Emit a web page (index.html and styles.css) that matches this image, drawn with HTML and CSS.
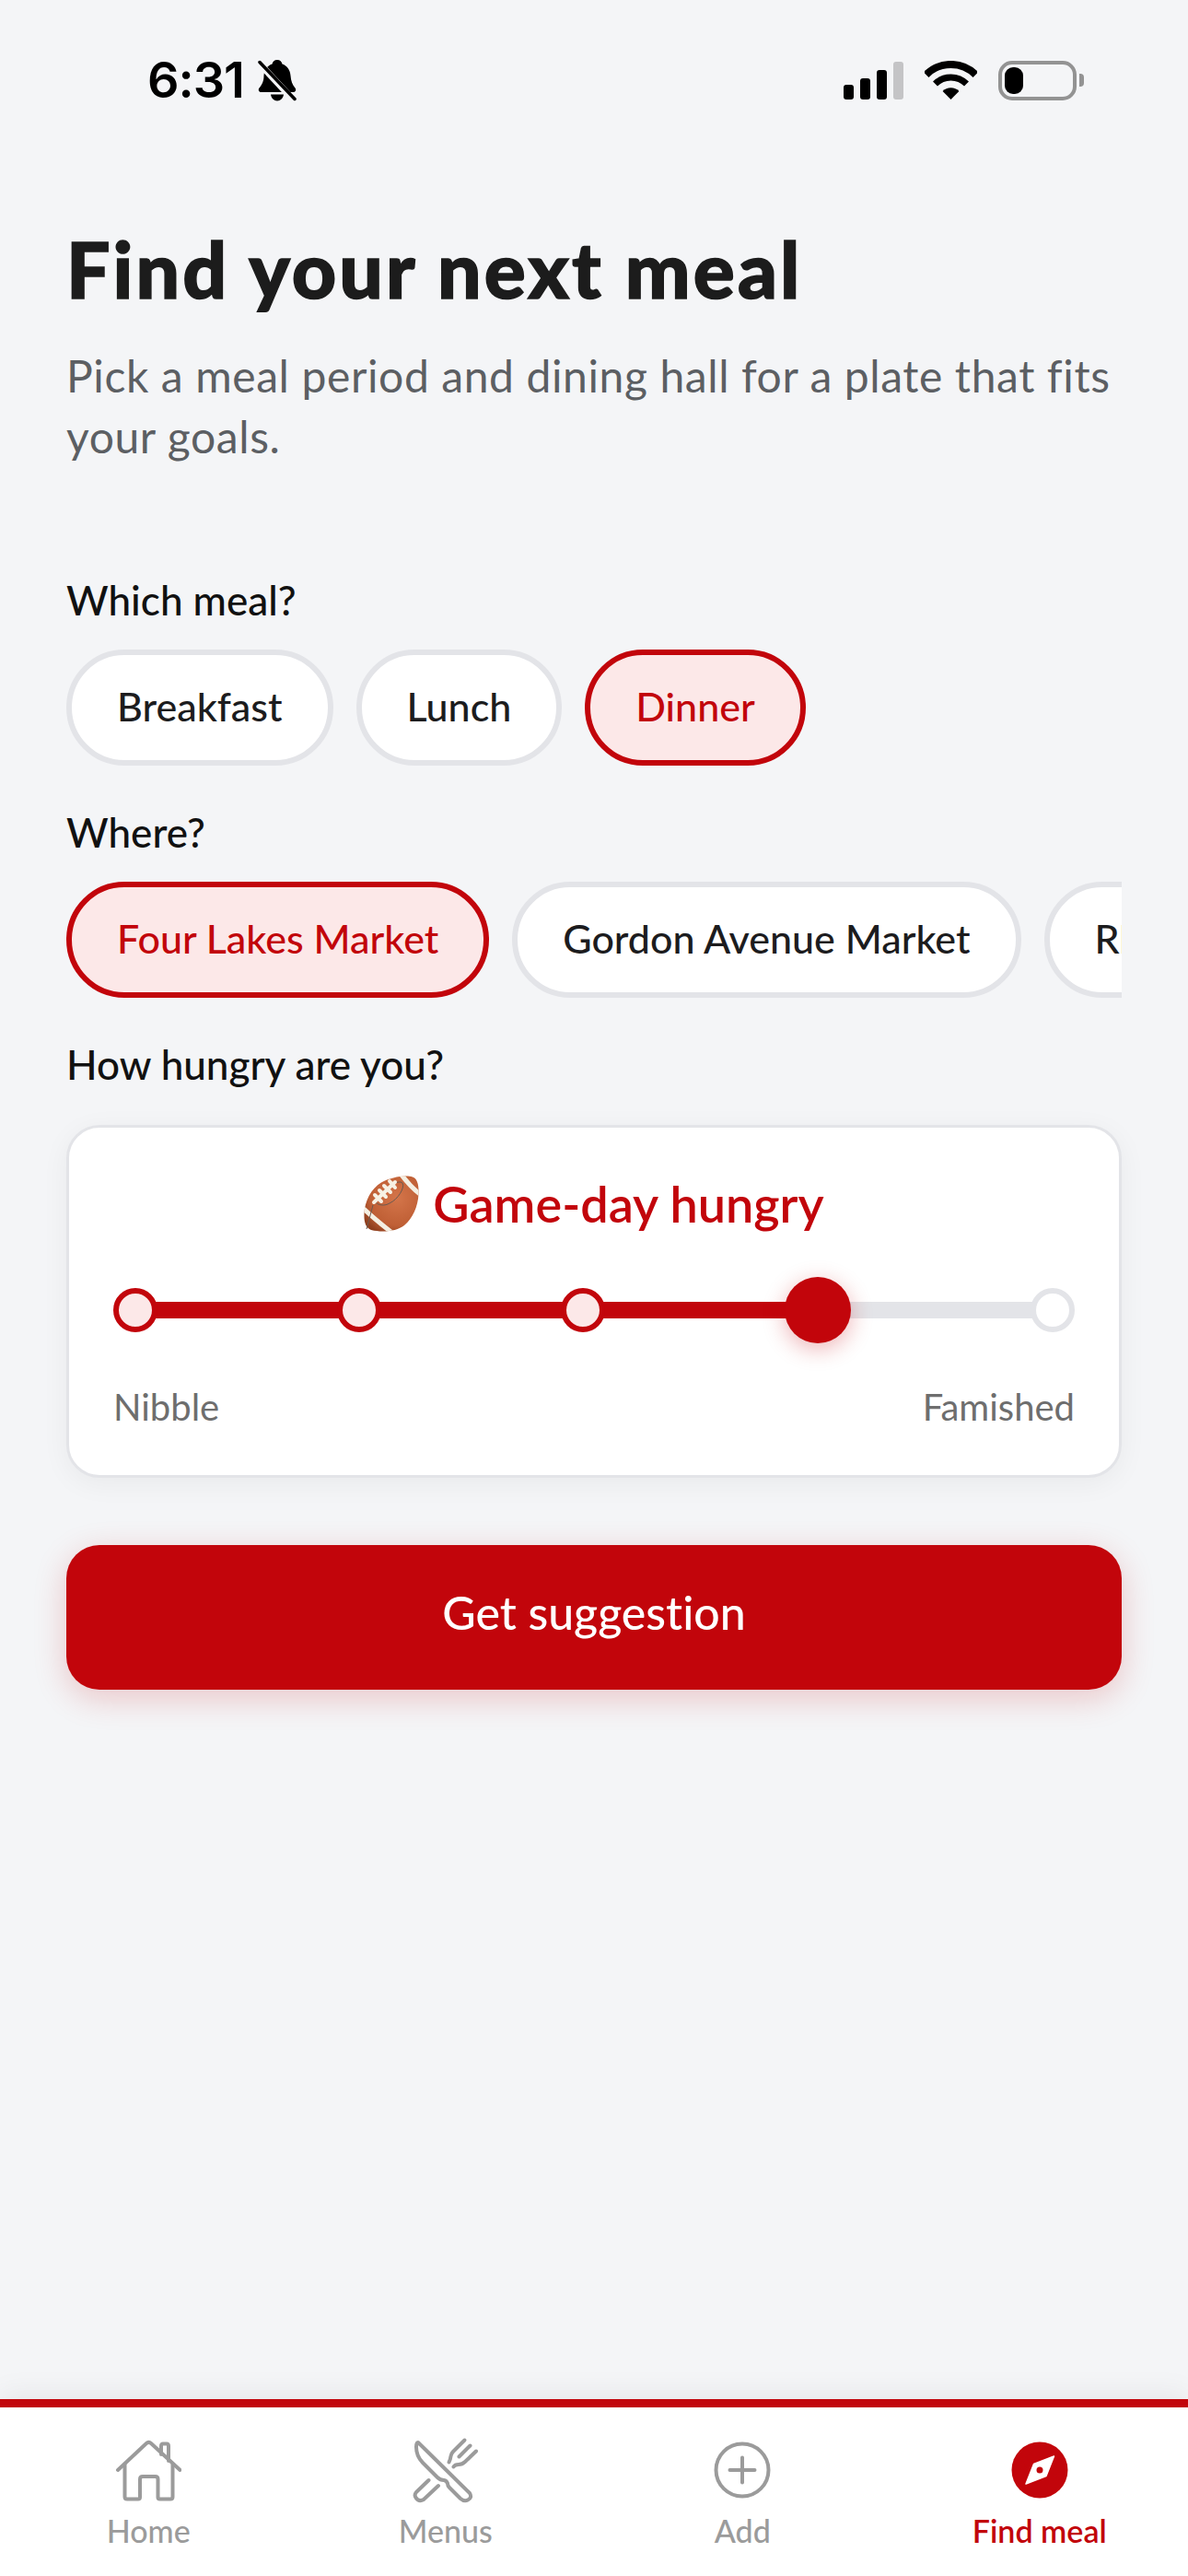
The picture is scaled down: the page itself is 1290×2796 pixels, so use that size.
FILE: index.html
```html
<!DOCTYPE html>
<html lang="en">
<head>
    <meta charset="UTF-8">
    <meta name="viewport" content="width=device-width, initial-scale=1.0">
    <title>Find meal</title>
    <link rel="stylesheet" href="styles.css">
</head>
<body>
    <!-- Status bar -->
    <header class="status-bar">
        <div class="status-left">
            <span class="clock">6:31</span>
            <svg class="bell" viewBox="0 0 42 45" width="42" height="45">
                <path fill="#000" d="M21 0c3 0 5 2 5.500 4.500C32 6.500 35 11 35.500 17c.5 6 2 10 5 13.500 1.500 2 .5 4.500-2 4.500H3.500c-2.500 0-3.500-2.500-2-4.500C4.500 27 6.500 23 6.500 17 7 11 10 6.500 15.500 4.500 16 2 18 0 21 0z"/>
                <path fill="#000" d="M14 37.500h14c-.5 4-3.500 7-7 7s-6.500-3-7-7z"/>
                <path stroke="#f4f5f7" stroke-width="7" d="M-2 0L40 45"/>
                <path stroke="#000" stroke-width="3.500" stroke-linecap="round" d="M2 2.500L40 42.500"/>
            </svg>
        </div>
        <div class="status-right">
            <div class="signal">
                <span class="bar bar-1"></span>
                <span class="bar bar-2"></span>
                <span class="bar bar-3"></span>
                <span class="bar bar-4"></span>
            </div>
            <svg class="wifi" viewBox="0 0 57 42" width="57" height="42">
                <path fill="none" stroke="#000" stroke-width="8" d="M1.600 15.100A38 38 0 0 1 55.400 15.100"/>
                <path fill="none" stroke="#000" stroke-width="7" d="M11.500 25A24 24 0 0 1 45.500 25"/>
                <path fill="#000" d="M28.500 42L19.600 33A12.500 12.500 0 0 1 37.400 33z"/>
            </svg>
            <div class="battery">
                <span class="battery-level"></span>
            </div>
            <span class="battery-nub"></span>
        </div>
    </header>

    <main class="content">
        <h1>Find your next meal</h1>
        <p class="subtitle">Pick a meal period and dining hall for a plate that fits your goals.</p>

        <h2 class="field-label">Which meal?</h2>
        <div class="chip-row">
            <button class="chip">Breakfast</button>
            <button class="chip">Lunch</button>
            <button class="chip chip-active">Dinner</button>
        </div>

        <h2 class="field-label">Where?</h2>
        <div class="chip-row">
            <button class="chip chip-active">Four Lakes Market</button>
            <button class="chip">Gordon Avenue Market</button>
            <button class="chip">Rheta's Market</button>
        </div>

        <h2 class="field-label field-label-card">How hungry are you?</h2>
        <section class="hunger-card">
            <div class="hunger-title">
                <svg class="football" viewBox="0 0 60 61" width="60" height="61">
                    <defs>
                        <radialGradient id="leather" cx="0.6" cy="0.4" r="0.7">
                            <stop offset="0" stop-color="#d4754a"/>
                            <stop offset="0.7" stop-color="#bf5f35"/>
                            <stop offset="1" stop-color="#8f3f1e"/>
                        </radialGradient>
                        <clipPath id="ball-clip">
                            <path d="M53 1.500C58 3 60 10 59.500 20 59 33 53 47 44 54 36 60.500 20 62 8 59 2 57 0 50 .5 41 1 28 8 14 19 7.500 29 2 45-1 53 1.500z"/>
                        </clipPath>
                    </defs>
                    <g clip-path="url(#ball-clip)">
                        <rect width="60" height="61" fill="url(#leather)"/>
                        <path fill="none" stroke="#f4efe2" stroke-width="5" d="M40-2C46 6 53 14 62 21"/>
                        <path fill="none" stroke="#f4efe2" stroke-width="5" d="M-2 34C6 42 18 52 32 63"/>
                    </g>
                    <path fill="none" stroke="#6b5a50" stroke-width="1" d="M10 32L3 58M12 28C22 12 38 4 42 8c3 5-5 18-14 22-5 3-12 3-16-2z"/>
                    <path fill="none" stroke="#f7f1e4" stroke-width="4" stroke-linecap="round" d="M11 29L34 7M12 21L19 28M17 16L24 23M22 11L29 18M28 6L34 13"/>
                </svg>
                <span>Game-day hungry</span>
            </div>
            <div class="slider">
                <div class="track"></div>
                <div class="track-fill"></div>
                <span class="dot dot-done"></span>
                <span class="dot dot-done"></span>
                <span class="dot dot-done"></span>
                <span class="thumb"></span>
                <span class="dot"></span>
            </div>
            <div class="scale-labels">
                <span>Nibble</span>
                <span>Famished</span>
            </div>
        </section>

        <button class="suggest-button">Get suggestion</button>
    </main>

    <!-- Bottom tabs -->
    <nav class="tab-bar">
        <a class="tab">
            <svg viewBox="0 0 72 72" width="72" height="72" class="tab-icon">
                <path d="M3 36L34 7q2.500-2.300 5 0L70.500 36"/>
                <path d="M10.500 30V65q0 2.500 2.500 2.500H25q2 0 2-2V46q0-3 3-3H43.500q3 0 3 3V65.500q0 2 2 2H60q2.500 0 2.500-2.500V30"/>
                <path d="M50 19V10q0-2.500 2-2.500H56q2 0 2 2.500V26"/>
            </svg>
            <span>Home</span>
        </a>
        <a class="tab">
            <svg viewBox="0 0 72 72" width="72" height="72" class="tab-icon">
                <path d="M6 6L62 61Q65 66 60 68.500 56 70.500 52 67L40 55Q38 53 38 50.500 37 47.500 34 47 30 47 27 44L11 28Q4 21 4 11 4 6 6 6z"/>
                <path d="M17.500 47L4 60Q1.500 63 3.500 66 7 71 12 68L28 53"/>
                <path d="M56.500 3.500L44 16Q42 18 41.500 21 41 25 39.500 27.500"/>
                <path d="M62.500 9.500L50.500 21.500"/>
                <path d="M69 15.500L57 27Q54 30 50 30 46 30 44.500 32.500"/>
            </svg>
            <span>Menus</span>
        </a>
        <a class="tab">
            <svg viewBox="0 0 72 72" width="72" height="72" class="tab-icon">
                <circle cx="36" cy="36" r="28.500"/>
                <path d="M22.500 36H49.500M36 22.500V49.500"/>
            </svg>
            <span>Add</span>
        </a>
        <a class="tab tab-active">
            <svg viewBox="0 0 72 72" width="72" height="72">
                <circle cx="36" cy="36" r="30.500" fill="#c2050b"/>
                <path fill="#fff" stroke="#fff" stroke-width="1.500" stroke-linejoin="round" d="M51.500 21L43 42.500 21 51 29.500 29.500z"/>
                <circle cx="36" cy="36" r="3.500" fill="#c2050b"/>
            </svg>
            <span>Find meal</span>
        </a>
    </nav>
</body>
</html>
```

FILE: styles.css
```css
* {
    box-sizing: border-box;
    font-variant-ligatures: none;
}

body {
    margin: 0;
    width: 1290px;
    height: 2796px;
    display: flex;
    flex-direction: column;
    background: #f4f5f7;
    color: #1c1c1e;
    font-family: "Lato", "Noto Sans", sans-serif;
    overflow: hidden;
}

/* status bar */
.status-bar {
    height: 174px;
    padding: 0 113px 0 160px;
    display: flex;
    justify-content: space-between;
    align-items: center;
    color: #000;
}

.status-left,
.status-right {
    display: flex;
    align-items: center;
}

.clock {
    font-family: "Inter", sans-serif;
    font-weight: 600;
    font-size: 54px;
    line-height: 60px;
    letter-spacing: -1px;
}

.bell {
    margin-left: 15px;
}

.signal {
    display: flex;
    align-items: flex-end;
    gap: 7px;
    height: 41px;
}

.bar {
    width: 11px;
    background: #000;
    border-radius: 3px;
}

.bar-1 { height: 16px; }
.bar-2 { height: 23px; }
.bar-3 { height: 32px; }
.bar-4 { height: 41px; background: #c4c4c6; }

.wifi {
    margin-left: 23px;
}

.battery {
    margin-left: 23px;
    width: 85px;
    height: 43px;
    padding: 3px;
    border: 4px solid #939393;
    border-radius: 15px;
}

.battery-level {
    display: block;
    width: 20px;
    height: 29px;
    background: #000;
    border-radius: 9px;
}

.battery-nub {
    margin-left: 3px;
    width: 5px;
    height: 14px;
    background: #939393;
    border-radius: 0 4px 4px 0;
}

/* page */
.content {
    flex: 1;
    padding: 68px 72px 0;
}

h1 {
    margin: 0;
    font-size: 84px;
    line-height: 100px;
    font-weight: 900;
    letter-spacing: 3.1px;
    -webkit-text-stroke: 1.5px #1c1c1c;
    color: #1c1c1c;
}

.subtitle {
    margin: 33px 0 114px;
    font-size: 48px;
    line-height: 66px;
    letter-spacing: 0.6px;
    color: #5c5f63;
}

.field-label {
    margin: 42px 0 24px;
    font-size: 44px;
    line-height: 60px;
    font-weight: 500;
    color: #111;
}

.field-label-card {
    margin-bottom: 36px;
}

.chip-row {
    display: flex;
    gap: 25px;
    overflow: hidden;
}

.chip {
    flex: none;
    height: 126px;
    padding: 0 49px 4px;
    background: #fff;
    border: 6px solid #e3e4e8;
    border-radius: 63px;
    font-family: inherit;
    font-size: 43px;
    font-weight: 500;
    color: #1c1c1e;
}

.chip-active {
    background: #fce8e8;
    border-color: #c2050b;
    color: #c2050b;
}

/* hunger card */
.hunger-card {
    padding: 46px 48px 47px;
    background: #fff;
    border: 3px solid #e3e4e8;
    border-radius: 36px;
    box-shadow: 0 6px 30px rgba(0, 0, 0, 0.05);
}

.hunger-title {
    height: 72px;
    display: flex;
    justify-content: center;
    align-items: center;
    gap: 15px;
    font-size: 54px;
    font-weight: 600;
    color: #c2050b;
}

.slider {
    position: relative;
    height: 72px;
    margin-top: 44px;
    display: flex;
    justify-content: space-between;
    align-items: center;
}

.track,
.track-fill {
    position: absolute;
    top: 27px;
    left: 24px;
    height: 18px;
}

.track {
    right: 24px;
    background: #e3e4e8;
}

.track-fill {
    width: 742px;
    background: #c2050b;
}

.dot,
.thumb {
    position: relative;
    border-radius: 50%;
}

.dot {
    width: 48px;
    height: 48px;
    background: #fff;
    border: 6px solid #e3e4e8;
}

.dot-done {
    background: #fce8e8;
    border-color: #c2050b;
}

.thumb {
    width: 72px;
    height: 72px;
    background: #c2050b;
    box-shadow: 0 6px 24px rgba(197, 5, 12, 0.3);
}

.scale-labels {
    margin-top: 42px;
    display: flex;
    justify-content: space-between;
    font-size: 40px;
    line-height: 54px;
    color: #6e6e6e;
}

.suggest-button {
    display: block;
    width: 100%;
    height: 157px;
    margin-top: 73px;
    padding-bottom: 12px;
    background: #c2050b;
    border: none;
    border-radius: 36px;
    box-shadow: 0 9px 36px rgba(197, 5, 12, 0.2);
    font-family: inherit;
    font-size: 50px;
    font-weight: 500;
    color: #fff;
}

/* tabs */
.tab-bar {
    height: 192px;
    padding-top: 32px;
    display: grid;
    grid-template-columns: repeat(4, 1fr);
    background: #fff;
    border-top: 9px solid #c2050b;
    box-shadow: 0 -6px 30px rgba(0, 0, 0, 0.06);
}

.tab {
    display: flex;
    flex-direction: column;
    align-items: center;
    font-size: 34px;
    line-height: 44px;
    font-weight: 500;
    color: #9b9b9b;
}

.tab span {
    margin-top: 8px;
}

.tab-icon {
    fill: none;
    stroke: #9b9b9b;
    stroke-width: 4;
    stroke-linecap: round;
    stroke-linejoin: round;
}

.tab-active {
    color: #c2050b;
    font-weight: 600;
}
```
